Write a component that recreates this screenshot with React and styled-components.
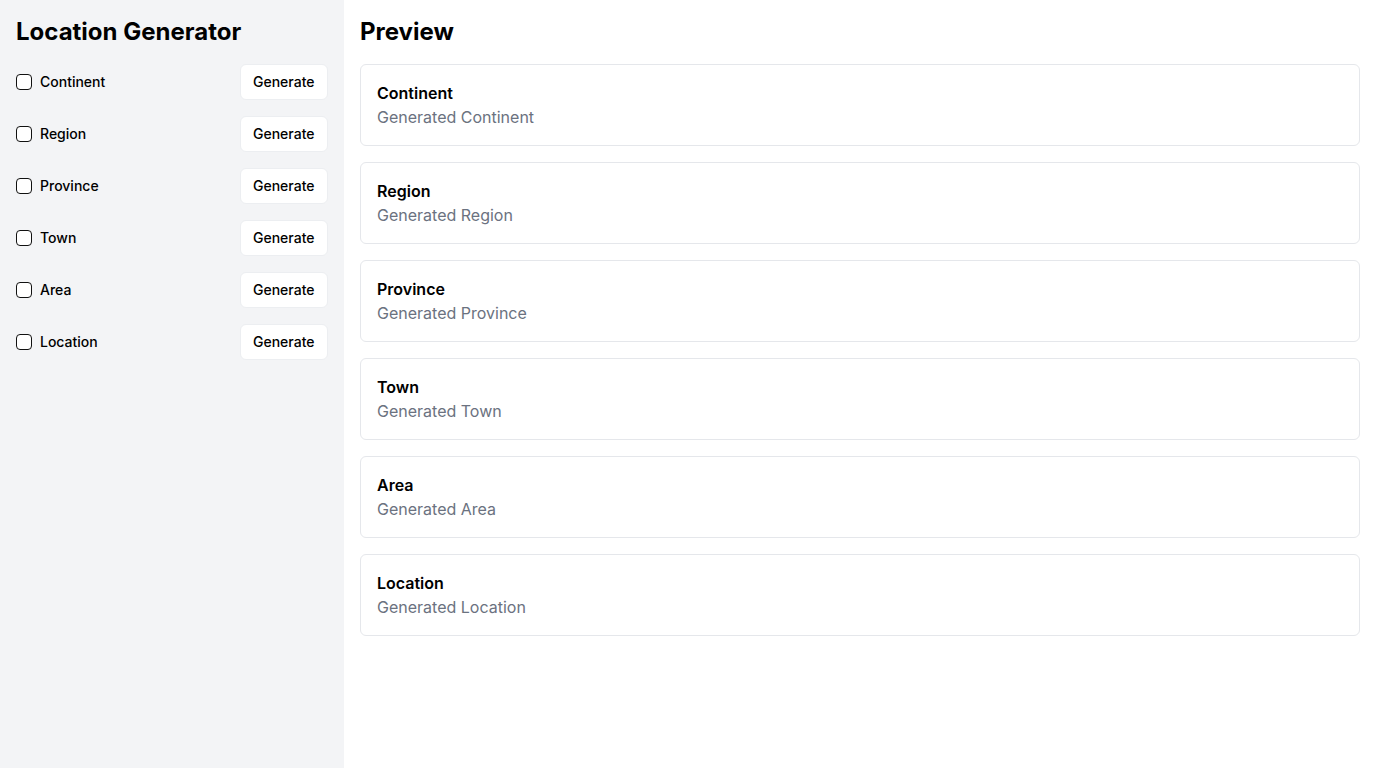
import React, { useState } from "react";
import styled, { createGlobalStyle } from "styled-components";

const GlobalStyle = createGlobalStyle`
  * { box-sizing: border-box; }
  body {
    margin: 0;
    font-family: Inter, "Noto Sans", sans-serif;
    color: #000;
    background: #fff;
  }
`;

const fields = ["Continent", "Region", "Province", "Town", "Area", "Location"];

const App = () => {
  const [checked, setChecked] = useState({});

  const toggle = (name) => setChecked({ ...checked, [name]: !checked[name] });

  return (
    <>
      <GlobalStyle />
      <Layout>
        <Sidebar>
          <Title>Location Generator</Title>
          <List>
            {fields.map((f) => (
              <Row key={f}>
                <Label>
                  <Checkbox
                    type="checkbox"
                    checked={!!checked[f]}
                    onChange={() => toggle(f)}
                  />
                  {f}
                </Label>
                <Button>Generate</Button>
              </Row>
            ))}
          </List>
        </Sidebar>
        <Content>
          <Title>Preview</Title>
          <List>
            {fields.map((f) => (
              <Card key={f}>
                <CardTitle>{f}</CardTitle>
                <CardText>Generated {f}</CardText>
              </Card>
            ))}
          </List>
        </Content>
      </Layout>
    </>
  );
};

export default App;

const Layout = styled.div`
  display: flex;
  min-height: 100vh;
`;

const Sidebar = styled.aside`
  width: 344px;
  flex-shrink: 0;
  background: #f3f4f6;
  padding: 16px;
`;

const Content = styled.main`
  flex: 1;
  padding: 16px;
`;

const Title = styled.h1`
  margin: 0 0 16px;
  font-size: 24px;
  line-height: 32px;
  font-weight: 700;
`;

const List = styled.div`
  display: flex;
  flex-direction: column;
  gap: 16px;
`;

const Row = styled.div`
  display: flex;
  align-items: center;
  justify-content: space-between;
`;

const Label = styled.label`
  display: flex;
  align-items: center;
  gap: 8px;
  font-size: 14px;
  line-height: 20px;
  font-weight: 500;
`;

const Checkbox = styled.input`
  appearance: none;
  width: 16px;
  height: 16px;
  margin: 0;
  border: 1px solid #111;
  border-radius: 4px;
  background: #fff;
  &:checked {
    background: #111;
  }
`;

const Button = styled.button`
  padding: 7px 12.5px;
  font-family: inherit;
  font-size: 14px;
  line-height: 20px;
  font-weight: 500;
  color: #000;
  background: #fff;
  border: 1px solid #eceef1;
  border-radius: 6px;
  cursor: pointer;
`;

const Card = styled.div`
  border: 1px solid #e5e7eb;
  border-radius: 6px;
  padding: 16px;
  background: #fff;
`;

const CardTitle = styled.div`
  font-size: 16px;
  line-height: 24px;
  font-weight: 600;
`;

const CardText = styled.div`
  font-size: 16px;
  line-height: 24px;
  color: #6b7280;
`;
